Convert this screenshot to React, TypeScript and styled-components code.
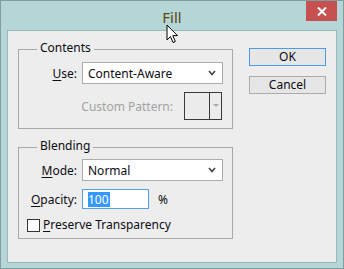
import React from "react";
import styled, { createGlobalStyle } from "styled-components";

const Global = createGlobalStyle`
  html, body { margin: 0; padding: 0; background: #b4d6d6; }
  * { box-sizing: border-box; }
`;

const Window = styled.div`
  position: relative;
  width: 344px;
  height: 269px;
  border: 1px solid #7f9f9f;
  background: #b4d6d6;
  padding: 0 6px 5px 6px;
  display: flex;
  flex-direction: column;
  font-family: "Noto Sans", "DejaVu Sans", sans-serif;
  font-size: 12px;
  color: #0c0c14;
`;

const TitleBar = styled.div`
  height: 29px;
  display: grid;
  grid-template-columns: 1fr auto 1fr;
  align-items: start;
`;

const Title = styled.div`
  grid-column: 2;
  font-size: 15px;
  line-height: 20px;
  margin-top: 6px;
  color: #5a4715;
`;

const CloseButton = styled.div`
  grid-column: 3;
  justify-self: end;
  width: 31px;
  height: 20px;
  background: #c75050;
  display: flex;
  align-items: center;
  justify-content: center;
`;

const Client = styled.div`
  flex: 1;
  border: 1px solid #98b7b7;
  background: #ededed;
  display: flex;
  padding: 0 10px 0 10px;
`;

const LeftColumn = styled.div`
  width: 215px;
  display: flex;
  flex-direction: column;
  padding-top: 18px;
  gap: 18px;
`;

const RightColumn = styled.div`
  margin-left: 16px;
  width: 77px;
  display: flex;
  flex-direction: column;
  padding-top: 17px;
  gap: 10px;
`;

const Group = styled.div<{ $pb: number }>`
  border: 1px solid #a8a8a8;
  display: flex;
  flex-direction: column;
  padding-bottom: ${(p) => p.$pb}px;
`;

const GroupTitle = styled.div`
  align-self: flex-start;
  margin: -10px 0 0 18px;
  padding: 0 3px;
  line-height: 16px;
  background: #ededed;
`;

const FieldRow = styled.div<{ $mt: number }>`
  display: flex;
  align-items: center;
  margin-top: ${(p) => p.$mt}px;
`;

const Label = styled.div`
  width: 58px;
  text-align: right;
  margin-right: 5px;
  white-space: nowrap;
`;

const PatternRow = styled.div<{ $mt: number }>`
  display: flex;
  align-items: center;
  justify-content: flex-end;
  padding-right: 10px;
  margin-top: ${(p) => p.$mt}px;
  gap: 11px;
`;

const DisabledLabel = styled.div`
  color: #a2a2a2;
`;

const Select = styled.div`
  width: 141px;
  height: 22px;
  border: 1px solid #acacac;
  background: #ffffff;
  display: flex;
  align-items: center;
  justify-content: space-between;
  padding: 0 6px 0 5px;
`;

const PatternBox = styled.div`
  width: 38px;
  height: 28px;
  border: 1px solid #3a3a3a;
  background: #ececec;
  display: flex;
`;

const PatternSwatch = styled.div`
  width: 25px;
  border-right: 1px solid #3a3a3a;
`;

const PatternArrow = styled.div`
  flex: 1;
  display: flex;
  align-items: center;
  justify-content: center;
`;

const TextBox = styled.div`
  width: 67px;
  height: 20px;
  border: 1px solid #5a9fe6;
  background: #ffffff;
  display: flex;
  align-items: center;
  padding-left: 5px;
`;

const Selected = styled.span`
  background: #3399ff;
  color: #ffffff;
  line-height: 15px;
  padding-right: 1px;
`;

const Unit = styled.div`
  margin-left: 9px;
`;

const CheckRow = styled.div`
  display: flex;
  align-items: center;
  margin-top: 8px;
  padding-left: 8px;
  gap: 3px;
  line-height: 16px;
`;

const CheckBox = styled.div`
  width: 13px;
  height: 13px;
  border: 1px solid #333333;
  background: #ffffff;
`;

const Button = styled.div<{ $default?: boolean }>`
  height: 18px;
  border: 1px solid ${(p) => (p.$default ? "#4a9de6" : "#acacac")};
  background: #e6e6e6;
  display: flex;
  align-items: center;
  justify-content: center;
  line-height: 16px;
`;

const U = styled.span`
  text-decoration: underline;
  text-underline-offset: 2px;
`;

const Cursor = styled.svg`
  position: absolute;
  left: 165px;
  top: 23px;
`;

const Chevron = () => (
  <svg width="8" height="6" viewBox="0 0 8 6">
    <polyline points="1,1 4,4.5 7,1" fill="none" stroke="#444" strokeWidth="1.6" />
  </svg>
);

export default function App() {
  return (
    <>
      <Global />
      <Window>
        <TitleBar>
          <Title>Fill</Title>
          <CloseButton>
            <svg width="10" height="9" viewBox="0 0 10 9">
              <path d="M1 0.5 L9 8.5 M9 0.5 L1 8.5" stroke="#fff" strokeWidth="2" />
            </svg>
          </CloseButton>
        </TitleBar>
        <Client>
          <LeftColumn>
            <Group $pb={8}>
              <GroupTitle>Contents</GroupTitle>
              <FieldRow $mt={6}>
                <Label>
                  <U>U</U>se:
                </Label>
                <Select>
                  <span>Content-Aware</span>
                  <Chevron />
                </Select>
              </FieldRow>
              <PatternRow $mt={8}>
                <DisabledLabel>Custom Pattern:</DisabledLabel>
                <PatternBox>
                  <PatternSwatch />
                  <PatternArrow>
                    <svg width="6" height="4" viewBox="0 0 6 4">
                      <polygon points="0,0 6,0 3,3" fill="#a8a8a8" />
                    </svg>
                  </PatternArrow>
                </PatternBox>
              </PatternRow>
            </Group>
            <Group $pb={5}>
              <GroupTitle>Blending</GroupTitle>
              <FieldRow $mt={5}>
                <Label>
                  <U>M</U>ode:
                </Label>
                <Select>
                  <span>Normal</span>
                  <Chevron />
                </Select>
              </FieldRow>
              <FieldRow $mt={8}>
                <Label>
                  <U>O</U>pacity:
                </Label>
                <TextBox>
                  <Selected>100</Selected>
                </TextBox>
                <Unit>%</Unit>
              </FieldRow>
              <CheckRow>
                <CheckBox />
                <span>
                  <U>P</U>reserve Transparency
                </span>
              </CheckRow>
            </Group>
          </LeftColumn>
          <RightColumn>
            <Button $default>OK</Button>
            <Button>Cancel</Button>
          </RightColumn>
        </Client>
        <Cursor width="14" height="21" viewBox="0 0 14 21">
          <path
            d="M1 1 L1 16 L4.5 12.5 L7 18.5 L9.3 17.5 L6.8 11.6 L11.5 11.6 Z"
            fill="#fff"
            stroke="#000"
            strokeWidth="1"
            strokeLinejoin="miter"
          />
        </Cursor>
      </Window>
    </>
  );
}
